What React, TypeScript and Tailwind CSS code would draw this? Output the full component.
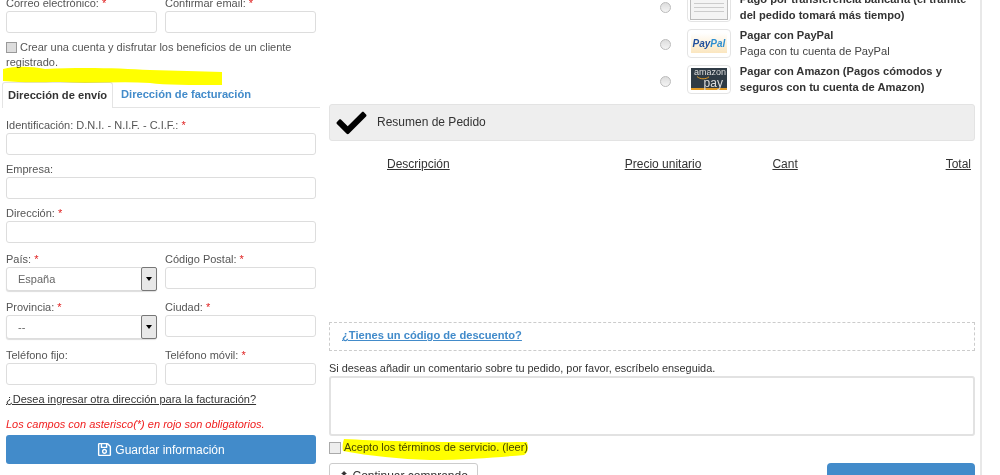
import { FaCheck, FaRegSave } from "react-icons/fa";

function Req() {
  return <span className="text-[#e02020]"> *</span>;
}

function Field({ label, req, wide, select, mt }: { label: string; req?: boolean; wide?: boolean; select?: string; mt?: string }) {
  return (
    <div className={`${wide ? "w-[310px]" : "w-[151px]"} ${mt ?? ""}`}>
      <label className="block h-[14px] text-[11px] leading-[14px] text-[#555]">
        {label}
        {req && <Req />}
      </label>
      {select ? (
        <div className="mt-[1px] flex h-[24px] items-center justify-between rounded-[3px] border border-[#ddd] bg-white pl-[11px] text-[11px] text-[#666] shadow-[0_1px_1px_#ddd]">
          <span>{select}</span>
          <span className="-mr-px flex h-[24px] w-[16px] items-center justify-center rounded-[2px] border border-[#777] bg-[#e8e8e8]">
            <span className="h-0 w-0 border-x-[3px] border-t-[4px] border-x-transparent border-t-black" />
          </span>
        </div>
      ) : (
        <input className="mt-[1px] block h-[22px] w-full rounded-[3px] border border-[#ddd] bg-white" />
      )}
    </div>
  );
}

function PayRow({ radio, thumb, children }: { radio: string; thumb: React.ReactNode; children: React.ReactNode }) {
  return (
    <div className="flex h-[32px] items-center">
      <span className={`ml-[331px] h-[11px] w-[11px] rounded-full border border-[#bbb] bg-gradient-to-b from-[#ddd] to-[#f4f4f4] ${radio}`} />
      <div className="ml-[16px] flex h-[29px] w-[44px] items-center justify-center overflow-hidden rounded-[4px] border border-[#e4e4e4] bg-white">
        {thumb}
      </div>
      <div className="ml-[9px] w-[236px] text-[11.15px] leading-[16px] text-[#333]">{children}</div>
    </div>
  );
}

export default function App() {
  return (
    <div className="relative flex h-[475px] w-[1000px] overflow-hidden bg-white font-['Liberation_Sans',Arial,sans-serif] text-[11px] text-[#333]">
      {/* left column */}
      <div className="ml-[6px] mt-[-4px] w-[310px] shrink-0">
        <div className="flex justify-between">
          <Field label="Correo electrónico:" req />
          <Field label="Confirmar email:" req />
        </div>
        <div className="mt-[7px] h-[30px] text-[11px] leading-[15px] text-[#555]">
          <span className="mr-[3px] inline-block h-[11px] w-[11px] translate-y-[2px] border border-[#999] bg-[#ddd]" />
          Crear una cuenta y disfrutar los beneficios de un cliente registrado.
        </div>
        <div className="-ml-[4px] mt-[12px] flex h-[26px] w-[318px] border-b border-[#e4e4e4]">
          <div className="flex h-[26px] w-[111px] items-center justify-center rounded-t-[3px] border-x border-t border-[#e4e4e4] bg-white text-[11.15px] font-bold text-[#333]">
            Dirección de envío
          </div>
          <div className="ml-[8px] flex h-[25px] items-center text-[11.15px] font-bold text-[#428bca]">Dirección de facturación</div>
        </div>
        <Field label="Identificación: D.N.I. - N.I.F. - C.I.F.:" req wide mt="mt-[10px]" />
        <Field label="Empresa:" wide mt="mt-[7px]" />
        <Field label="Dirección:" req wide mt="mt-[7px]" />
        <div className="mt-[9px] flex items-start justify-between">
          <Field label="País:" req select="España" />
          <Field label="Código Postal:" req />
        </div>
        <div className="mt-[9px] flex items-start justify-between">
          <Field label="Provincia:" req select="--" />
          <Field label="Ciudad:" req />
        </div>
        <div className="mt-[9px] flex justify-between">
          <Field label="Teléfono fijo:" />
          <Field label="Teléfono móvil:" req />
        </div>
        <a className="mt-[7px] block h-[15px] leading-[15px] text-[#333] underline">¿Desea ingresar otra dirección para la facturación?</a>
        <p className="mt-[10px] h-[15px] text-[11px] italic leading-[15px] text-[#f02020]">Los campos con asterisco(*) en rojo son obligatorios.</p>
        <button className="mt-[3px] flex h-[29px] w-[310px] items-center justify-center gap-[3px] rounded-[3px] bg-[#428bca] text-[12px] text-white">
          <FaRegSave className="h-[15px] w-[15px]" />
          Guardar información
        </button>
      </div>

      {/* right column */}
      <div className="ml-[13px] mt-[-9px] w-[646px] shrink-0">
        <div className="flex flex-col gap-[4px]">
          <PayRow
            radio=""
            thumb={
              <div className="h-[26px] w-[38px] border border-[#bbb] bg-[#f4f4f4] p-[3px]">
                <div className="h-[2px] w-[16px] bg-[#bbb]" />
                <div className="mt-[3px] h-[1px] w-full bg-[#ccc]" />
                <div className="mt-[3px] h-[1px] w-full bg-[#ccc]" />
                <div className="mt-[3px] h-[1px] w-full bg-[#ccc]" />
              </div>
            }
          >
            <b>Pago por transferencia bancaria (el trámite del pedido tomará más tiempo)</b>
          </PayRow>
          <PayRow
            radio="translate-y-[1px]"
            thumb={
              <div className="flex h-[20px] w-[36px] items-center justify-center bg-gradient-to-b from-white to-[#fbe6bf] text-[10px] font-bold italic">
                <span className="text-[#1f4f9c]">Pay</span>
                <span className="text-[#2f8fd0]">Pal</span>
              </div>
            }
          >
            <b>Pagar con PayPal</b>
            <br />
            <span className="text-[#444]">Paga con tu cuenta de PayPal</span>
          </PayRow>
          <PayRow
            radio="translate-y-[2px]"
            thumb={
              <div className="relative h-[22px] w-[36px] border-b-2 border-[#e09a26] bg-[#2f3b45] px-[3px] text-[9px] leading-[9px] text-[#ddd]">
                <div>amazon</div>
                <div className="mt-[1px] pr-[1px] text-right text-[12px] leading-[10px]">pay</div>
                <svg className="absolute left-[5px] top-[8px]" width="14" height="4" fill="none">
                  <path d="M1 0.5 C4 3.5 10 3.5 13 0.8" stroke="#e09a26" strokeWidth="1" />
                </svg>
              </div>
            }
          >
            <b>Pagar con Amazon (Pagos cómodos y seguros con tu cuenta de Amazon)</b>
          </PayRow>
        </div>

        <div className="mt-[9px] flex h-[37px] items-center rounded-[3px] border border-[#e3e3e3] bg-[#eee] pl-[6px]">
          <FaCheck className="h-[30px] w-[31px] text-black" />
          <span className="ml-[10px] pb-[2px] text-[12px] text-[#333]">Resumen de Pedido</span>
        </div>

        <div className="mt-[15px] flex h-[16px] text-[12px] leading-[16px] text-[#333] underline">
          <span className="ml-[58px]">Descripción</span>
          <span className="ml-[175px]">Precio unitario</span>
          <span className="ml-[71px]">Cant</span>
          <span className="ml-auto mr-[4px]">Total</span>
        </div>

        <div className="mt-[150px] flex h-[29px] items-center border border-dashed border-[#ccc] pb-[2px] pl-[12px] text-[11.15px] font-bold text-[#428bca] underline">
          ¿Tienes un código de descuento?
        </div>
        <p className="mt-[10px] h-[15px] text-[10.9px] leading-[15px] text-[#333]">Si deseas añadir un comentario sobre tu pedido, por favor, escríbelo enseguida.</p>
        <textarea className="block h-[60px] w-full resize-none rounded-[3px] border-2 border-[#e2e2e2]" />
        <div className="mt-[4px] flex h-[15px] items-center text-[#444]">
          <span className="h-[12px] w-[12px] border border-[#aaa] bg-[#eee]" />
          <span className="ml-[3px]">Acepto los términos de servicio. (leer)</span>
        </div>
        <div className="mt-[8px] flex items-start justify-between">
          <button className="h-[28px] w-[149px] rounded-[3px] border border-[#ccc] bg-white pb-[2px] text-[12px] text-[#333]">⬆ Continuar comprando</button>
          <div className="h-[28px] w-[148px] rounded-[4px] bg-[#428bca]" />
        </div>
      </div>

      {/* page edge */}
      <div className="ml-[5px] h-full w-[2px] bg-[#e8e8e8]" />

      {/* hand-drawn highlighter marks */}
      <svg className="pointer-events-none absolute left-0 top-0 mix-blend-multiply" width="1000" height="475" fill="none">
        <path d="M3 69 C15 66 30 66 45 69 C80 67 120 68 150 70 C175 71 200 71 222 72 L222 85 C190 85 165 85 150 83 C120 81 90 84 60 82 C40 82 25 83 3 81 Z" fill="#ffff00" />
        <path d="M344 439 C380 441 450 443 527 442 C529 448 528 453 524 455 C500 457 470 460 430 460 C400 459 370 456 343 451 C342 447 343 442 344 439 Z" fill="#ffff00" />
      </svg>
    </div>
  );
}
